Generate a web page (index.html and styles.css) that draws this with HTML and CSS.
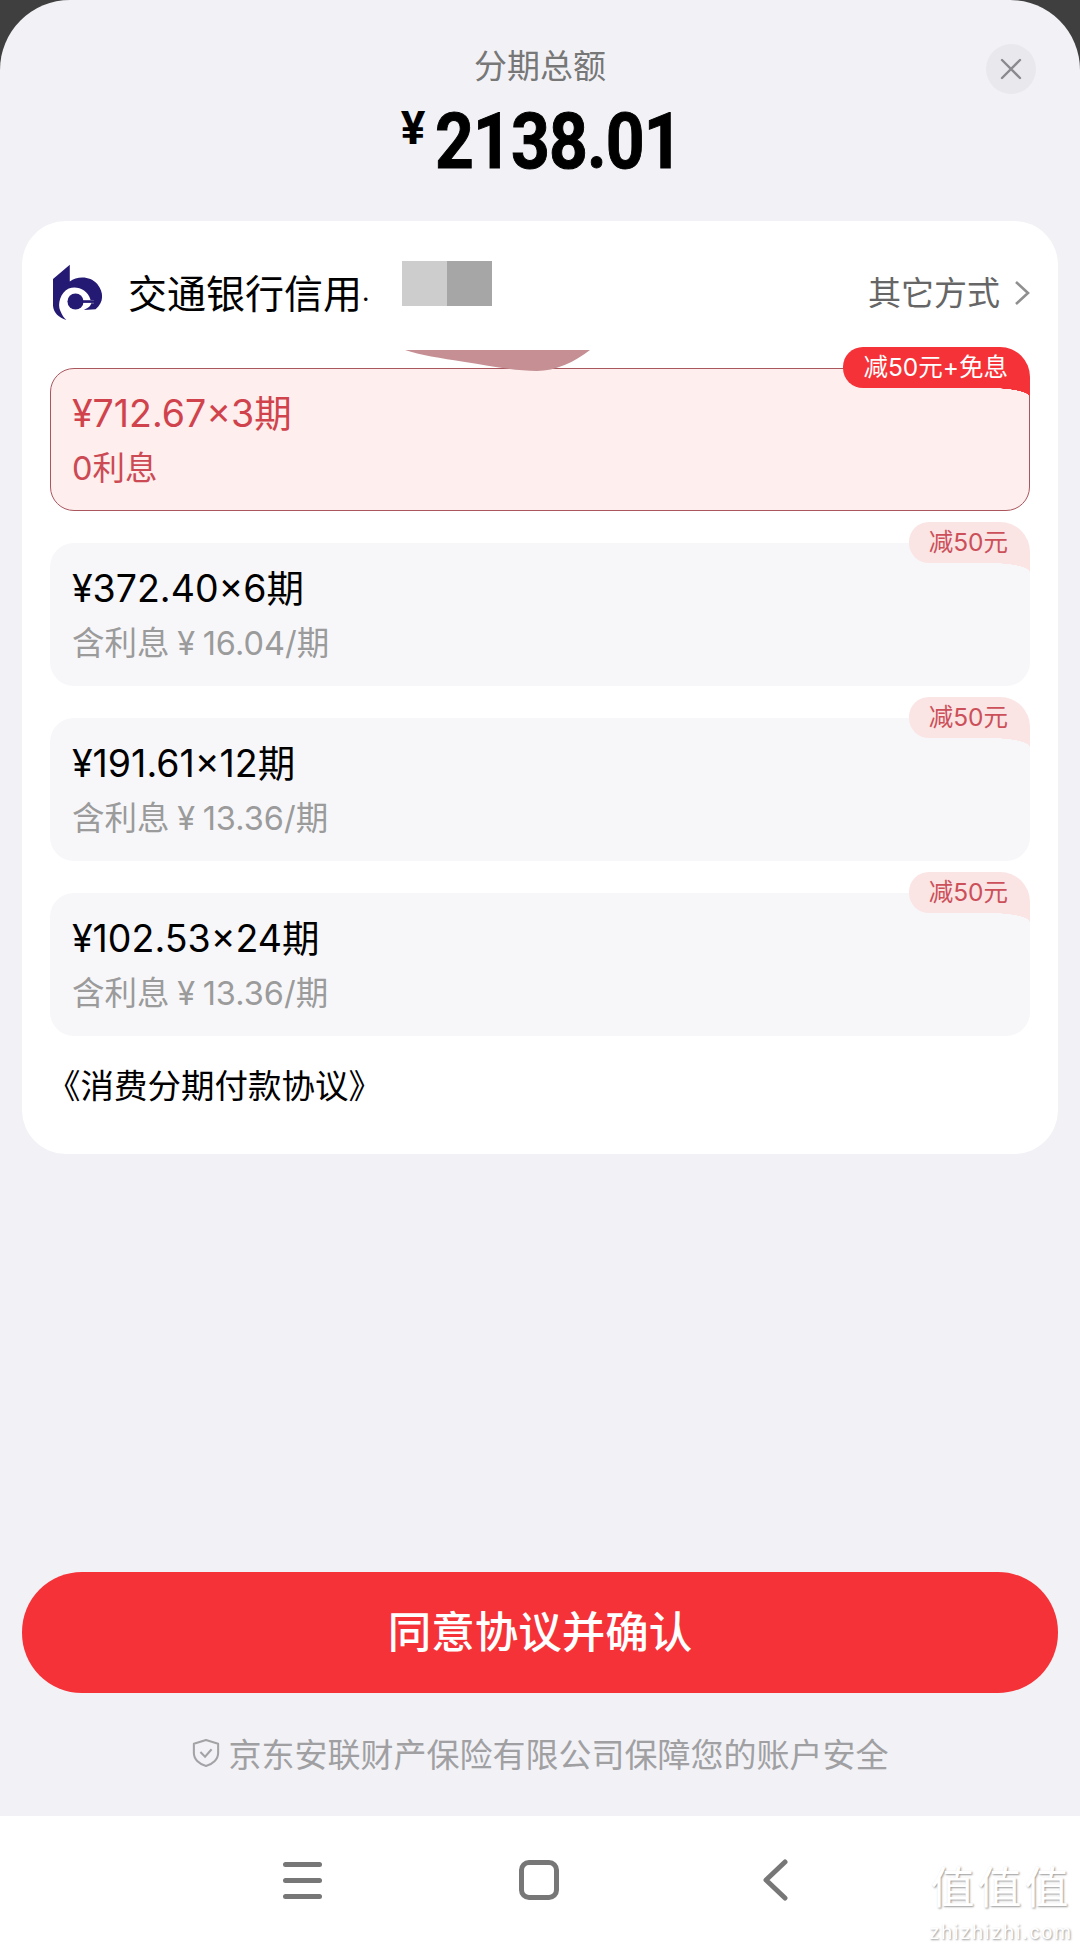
FILE: index.html
```html
<!DOCTYPE html>
<html lang="zh-CN">
<head>
    <meta charset="UTF-8">
    <meta name="viewport" content="width=device-width, initial-scale=1.0">
    <title>分期总额</title>
    <link rel="stylesheet" href="styles.css">
</head>
<body>
    <div class="sheet">
        <div class="header">
            <div class="header-label">分期总额</div>
            <div class="total"><span class="total-sign">¥</span><span class="total-num">2138.01</span></div>
            <div class="close">
                <svg width="22" height="22" viewBox="0 0 22 22"><path d="M2 2L20 20M20 2L2 20" stroke="#8a8a8e" stroke-width="2.4" stroke-linecap="round"/></svg>
            </div>
        </div>

        <div class="card">
            <div class="pay-method">
                <svg class="bank-logo" width="52" height="57" viewBox="35 45 155 170">
                    <path d="M38 90L88 47V97C110 80 150 80 170 105C190 130 190 160 165 180L130 182C145 175 150 170 152 162H160V152H150C140 120 110 110 85 118C60 130 50 165 60 185C65 197 70 205 78 212C55 205 40 190 38 170Z" fill="#251a73"/>
                    <circle cx="105" cy="157" r="24" fill="#251a73"/>
                    <rect x="125" y="153" width="36" height="8" fill="#251a73"/>
                </svg>
                <span class="bank-name">交通银行信用<span class="bank-dot">·</span></span>
                <span class="other-way">其它方式</span>
                <svg class="chevron" width="16" height="26" viewBox="0 0 16 26"><path d="M2 2L14 13L2 24" fill="none" stroke="#8f8f8f" stroke-width="2.6"/></svg>
                <div class="mask"><i class="mask-light"></i><i class="mask-dark"></i></div>
            </div>

            <svg class="smudge" width="186" height="22" viewBox="0 0 186 22"><path d="M0 0H185C170 12 150 21 132 21C110 21 85 16 60 12C35 8 15 5 0 0Z" fill="#c58f94"/></svg>

            <div class="plans">
                <div class="plan plan-active">
                    <div class="plan-title">¥712.67×3期</div>
                    <div class="plan-sub">0利息</div>
                    <div class="badge badge-active">减50元+免息</div>
                </div>
                <div class="plan">
                    <div class="plan-title">¥372.40×6期</div>
                    <div class="plan-sub">含利息 ¥ 16.04/期</div>
                    <div class="badge">减50元</div>
                </div>
                <div class="plan">
                    <div class="plan-title">¥191.61×12期</div>
                    <div class="plan-sub">含利息 ¥ 13.36/期</div>
                    <div class="badge">减50元</div>
                </div>
                <div class="plan">
                    <div class="plan-title">¥102.53×24期</div>
                    <div class="plan-sub">含利息 ¥ 13.36/期</div>
                    <div class="badge">减50元</div>
                </div>
            </div>

            <div class="agreement">《消费分期付款协议》</div>
        </div>

        <div class="bottom">
            <button class="confirm">同意协议并确认</button>
            <div class="secure">
                <svg width="28" height="32" viewBox="0 0 30 32"><path d="M15 2L28 6V16C28 23 22 28 15 30C8 28 2 23 2 16V6Z" fill="none" stroke="#a3a3a6" stroke-width="2.2" stroke-linejoin="round"/><path d="M9 15L14 20L21 12" fill="none" stroke="#a3a3a6" stroke-width="2.2"/></svg>
                <span>京东安联财产保险有限公司保障您的账户安全</span>
            </div>
        </div>
    </div>

    <div class="navbar">
        <div class="nav-slot">
            <div class="nav-menu"><i></i><i></i><i></i></div>
        </div>
        <div class="nav-slot">
            <div class="nav-home"></div>
        </div>
        <div class="nav-slot">
            <svg width="28" height="42" viewBox="0 0 28 42"><path d="M24 3L5 21L24 39" fill="none" stroke="#777" stroke-width="5" stroke-linecap="round" stroke-linejoin="round"/></svg>
        </div>
        <div class="watermark">
            <div class="watermark-cn">值值值</div>
            <div class="watermark-en">zhizhizhi.com</div>
        </div>
    </div>
</body>
</html>
```

FILE: styles.css
```css
* {
    box-sizing: border-box;
}
body {
    margin: 0;
    height: 1946px;
    display: flex;
    flex-direction: column;
    background-color: #3f3f3f;
    font-family: Inter, "Noto Sans CJK SC", sans-serif;
    overflow: hidden;
}
.sheet {
    height: 1816px;
    padding: 0 22px;
    display: flex;
    flex-direction: column;
    background-color: #f2f2f6;
    border-radius: 70px 70px 0 0;
}
.header {
    position: relative;
    height: 221px;
    padding-top: 44px;
    text-align: center;
}
.header-label {
    font-size: 33px;
    line-height: 44px;
    color: #777;
}
.total {
    margin-top: 14px;
    height: 80px;
    display: flex;
    justify-content: center;
    align-items: flex-start;
    color: #000;
    font-family: Roboto, sans-serif;
    font-weight: 700;
}
.total-sign {
    font-size: 46px;
    line-height: 52px;
    margin-right: 10px;
}
.total-num {
    display: inline-block;
    font-size: 77px;
    line-height: 80px;
    letter-spacing: -1px;
    transform: scaleX(0.88);
    transform-origin: left center;
    width: 244px;
    text-align: left;
    -webkit-text-stroke: 1px #000;
}
.close {
    position: absolute;
    top: 44px;
    right: 22px;
    width: 50px;
    height: 50px;
    border-radius: 50%;
    background: #e9e9ed;
    display: flex;
    align-items: center;
    justify-content: center;
}
.card {
    position: relative;
    height: 933px;
    padding: 0 28px;
    background: #fff;
    border-radius: 44px;
}
.pay-method {
    position: relative;
    height: 147px;
    padding-bottom: 8px;
    display: flex;
    align-items: center;
}
.bank-logo {
    margin-left: 2px;
    margin-right: 24px;
    margin-top: 4px;
}
.bank-name {
    font-size: 39px;
    color: #000;
    flex: 1;
}
.bank-dot {
    font-size: 26px;
}
.other-way {
    font-size: 33px;
    color: #666;
}
.chevron {
    margin-left: 14px;
    margin-top: 4px;
}
.mask {
    position: absolute;
    left: 352px;
    top: 40px;
    display: flex;
}
.mask i {
    display: block;
    width: 45px;
    height: 45px;
}
.mask-light {
    background: #cdcdcd;
}
.mask-dark {
    background: #a6a6a6;
}
.smudge {
    position: absolute;
    left: 383px;
    top: 129px;
    z-index: 1;
}
.plans {
    display: flex;
    flex-direction: column;
    gap: 32px;
}
.plan {
    position: relative;
    height: 143px;
    padding: 22px 22px 0;
    background: #f7f7fa;
    border-radius: 24px;
}
.plan-active {
    background: #feeeee;
    border: 1px solid #a9565d;
    padding: 21px 21px 0;
}
.plan-title {
    font-size: 37.5px;
    line-height: 48px;
    color: #000;
}
.plan-sub {
    margin-top: 9px;
    font-size: 32.5px;
    line-height: 44px;
    word-spacing: -1.5px;
    color: #9b9b9b;
}
.plan-active .plan-title {
    color: #d0434c;
}
.plan-active .plan-sub {
    color: #cc4a53;
}
.badge {
    position: absolute;
    top: -21px;
    right: 0;
    height: 41px;
    padding: 0 22px 0 20px;
    font-size: 24.5px;
    line-height: 41px;
    color: #cb5059;
    background: #fbe4e4;
    border-radius: 20px 30px 0 20px;
}
.badge::after {
    content: "";
    position: absolute;
    top: 100%;
    right: 0;
    width: 40px;
    height: 9px;
    background: radial-gradient(ellipse 40px 9px at 0 100%, transparent 98%, #fbe4e4 100%);
}
.badge-active {
    top: -22px;
    right: -1px;
    color: #fff;
    background: #f53237;
}
.badge-active::after {
    background: radial-gradient(ellipse 40px 9px at 0 100%, transparent 98%, #f53237 100%);
}
.agreement {
    margin-top: 28px;
    margin-left: -3px;
    font-size: 33.5px;
    line-height: 44px;
    color: #000;
}
.bottom {
    margin-top: auto;
    padding-bottom: 41px;
}
.confirm {
    display: block;
    width: 100%;
    height: 121px;
    padding: 0 0 6px;
    border: none;
    border-radius: 60px;
    background-color: #f53237;
    color: #fff;
    font-family: inherit;
    font-size: 43.5px;
    font-weight: 500;
}
.secure {
    margin-top: 38px;
    height: 44px;
    display: flex;
    justify-content: center;
    align-items: center;
    gap: 9px;
    font-size: 33px;
    color: #a0a0a3;
}
.navbar {
    position: relative;
    flex: 1;
    display: flex;
    justify-content: center;
    align-items: flex-start;
    padding-top: 43px;
    padding-right: 3px;
    background: #fff;
}
.nav-slot {
    width: 236px;
    height: 42px;
    display: flex;
    justify-content: center;
    align-items: center;
}
.nav-menu {
    width: 39px;
    display: flex;
    flex-direction: column;
    gap: 11px;
}
.nav-menu i {
    display: block;
    height: 5px;
    border-radius: 3px;
    background: #777;
}
.nav-home {
    width: 40px;
    height: 40px;
    border: 5px solid #777;
    border-radius: 10px;
}
.watermark {
    position: absolute;
    right: 6px;
    bottom: 2px;
    width: 146px;
    text-align: center;
    color: #fff;
    text-shadow: 1px 1px 2px #999;
}
.watermark-cn {
    font-size: 44px;
    line-height: 64px;
    letter-spacing: 3px;
}
.watermark-en {
    font-family: "Liberation Sans", sans-serif;
    font-size: 20px;
    line-height: 24px;
    letter-spacing: 1.8px;
}
```
